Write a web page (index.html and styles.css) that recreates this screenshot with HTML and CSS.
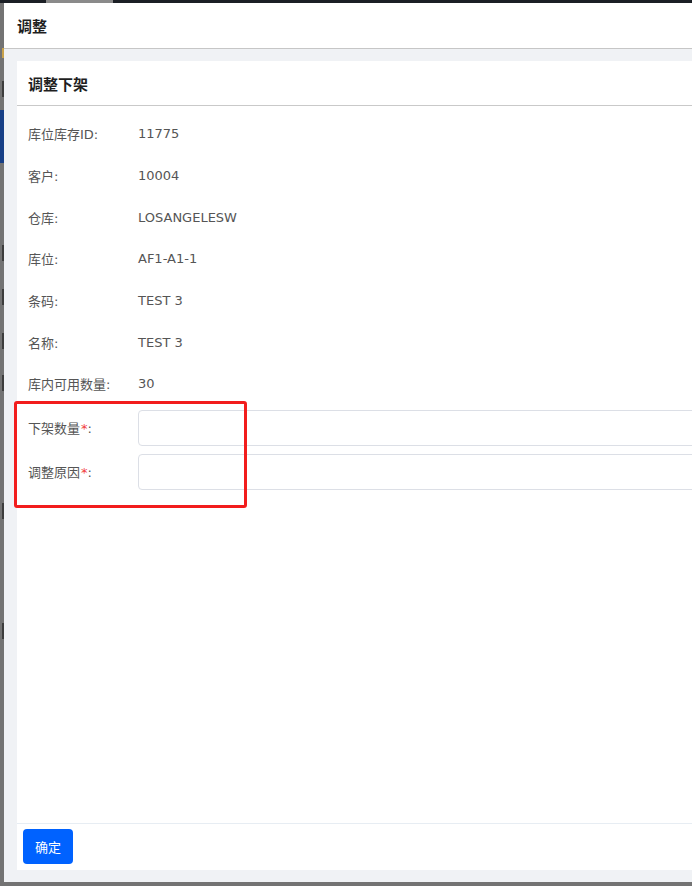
FILE: index.html
```html
<!DOCTYPE html>
<html lang="zh-CN">
<head>
<meta charset="utf-8">
<title>调整</title>
<link rel="stylesheet" href="styles.css">
</head>
<body>
<div class="topbar"><span class="tab"></span></div>
<div class="stage">
  <div class="gutter">
    <span class="g-mark g-i"></span>
    <span class="g-blue"></span>
    <span class="g-mark g-b1"></span>
    <span class="g-mark g-b2"></span>
    <span class="g-mark g-b3"></span>
    <span class="g-mark g-b4"></span>
    <span class="g-mark g-b5"></span>
    <span class="g-mark g-b6"></span>
    <span class="g-mark g-b7"></span>
  </div>
  <div class="modal">
    <div class="modal-header">调整</div>
    <div class="modal-body">
      <div class="card">
        <div class="card-header">调整下架</div>
        <div class="card-content">
          <div class="row"><span class="label">库位库存ID:</span><span class="value">11775</span></div>
          <div class="row"><span class="label">客户:</span><span class="value">10004</span></div>
          <div class="row"><span class="label">仓库:</span><span class="value">LOSANGELESW</span></div>
          <div class="row"><span class="label">库位:</span><span class="value">AF1-A1-1</span></div>
          <div class="row"><span class="label">条码:</span><span class="value">TEST 3</span></div>
          <div class="row"><span class="label">名称:</span><span class="value">TEST 3</span></div>
          <div class="row"><span class="label">库内可用数量:</span><span class="value">30</span></div>
          <div class="row input-row first-input"><span class="label">下架数量<span class="req">*</span>:</span><input class="field" type="text"></div>
          <div class="row input-row"><span class="label">调整原因<span class="req">*</span>:</span><input class="field" type="text"></div>
        </div>
        <div class="card-footer"><button class="btn-primary" type="button">确定</button></div>
      </div>
    </div>
  </div>
</div>
<div class="bottombar"></div>
<div class="annotation"></div>
</body>
</html>
```

FILE: styles.css
```css
html, body {
  margin: 0;
  padding: 0;
}
body {
  width: 692px;
  height: 886px;
  overflow: hidden;
  background: #737373;
  font-family: "DejaVu Sans", "Noto Sans CJK SC", sans-serif;
  font-size: 13px;
  color: #555;
  position: relative;
}
.topbar {
  height: 3px;
  background: #1b1f25;
  position: relative;
}
.tab {
  position: absolute;
  left: 46px;
  top: 0;
  width: 67px;
  height: 3px;
  background: #8a8a8a;
}
.stage {
  display: flex;
  height: 879px;
}
.gutter {
  width: 4px;
  flex: none;
  background: #737373;
  position: relative;
}
.g-blue {
  position: absolute;
  left: 0;
  top: 107px;
  width: 4px;
  height: 53px;
  background: #173f86;
}
.g-mark {
  position: absolute;
  left: 2px;
  width: 2px;
  height: 16px;
  background: #3d3d3d;
}
.g-i { top: 45px; height: 10px; background: #c9a24a; }
.g-b1 { top: 78px; }
.g-b2 { top: 242px; }
.g-b3 { top: 286px; }
.g-b4 { top: 330px; }
.g-b5 { top: 372px; }
.g-b6 { top: 500px; }
.g-b7 { top: 620px; }
.modal {
  width: 820px;
  flex: none;
  display: flex;
  flex-direction: column;
  background: #fff;
}
.modal-header {
  flex: none;
  box-sizing: border-box;
  display: flex;
  align-items: center;
  padding-left: 13px;
  font-size: 15px;
  font-weight: 600;
  color: #1f1f1f;
  border-bottom: 1px solid #c6c6c6;
  height: 46px;
}
.modal-body {
  flex: 1;
  background: #f0f2f5;
  padding: 12px 0 12px 13px;
  display: flex;
  flex-direction: column;
}
.card {
  flex: 1;
  background: #fff;
  display: flex;
  flex-direction: column;
}
.card-header {
  height: 45px;
  box-sizing: border-box;
  flex: none;
  display: flex;
  align-items: center;
  padding-left: 11px;
  font-size: 15px;
  font-weight: 700;
  color: #1f1f1f;
  border-bottom: 1px solid #c9c9c9;
}
.card-content {
  flex: 1;
  padding: 7px 0 0 11px;
}
.row {
  display: flex;
  align-items: center;
  height: 41.67px;
}
.label {
  width: 110px;
  flex: none;
  color: #555;
}
.value {
  color: #555;
}
.req {
  color: #f23c3c;
  margin-left: 1px;
}
.input-row {
  height: 44px;
}
.first-input {
  margin-top: 1px;
}
.field {
  flex: 1;
  height: 36px;
  box-sizing: border-box;
  border: 1px solid #dcdfe6;
  border-radius: 4px;
  background: #fff;
  margin: 0;
  outline: none;
}
.card-footer {
  flex: none;
  height: 47px;
  box-sizing: border-box;
  border-top: 1px solid #e7edf3;
  padding: 5px 0 0 6px;
}
.btn-primary {
  width: 50px;
  height: 35px;
  border: none;
  border-radius: 4px;
  background: #0062ff;
  color: #fff;
  font-family: "Noto Sans CJK SC", sans-serif;
  font-size: 13px;
  padding: 0;
}
.bottombar {
  height: 4px;
  background: #737373;
}
.annotation {
  position: absolute;
  left: 14px;
  top: 401px;
  width: 233px;
  height: 107px;
  box-sizing: border-box;
  border: 3px solid #f21d1d;
  border-radius: 3px;
}
```
